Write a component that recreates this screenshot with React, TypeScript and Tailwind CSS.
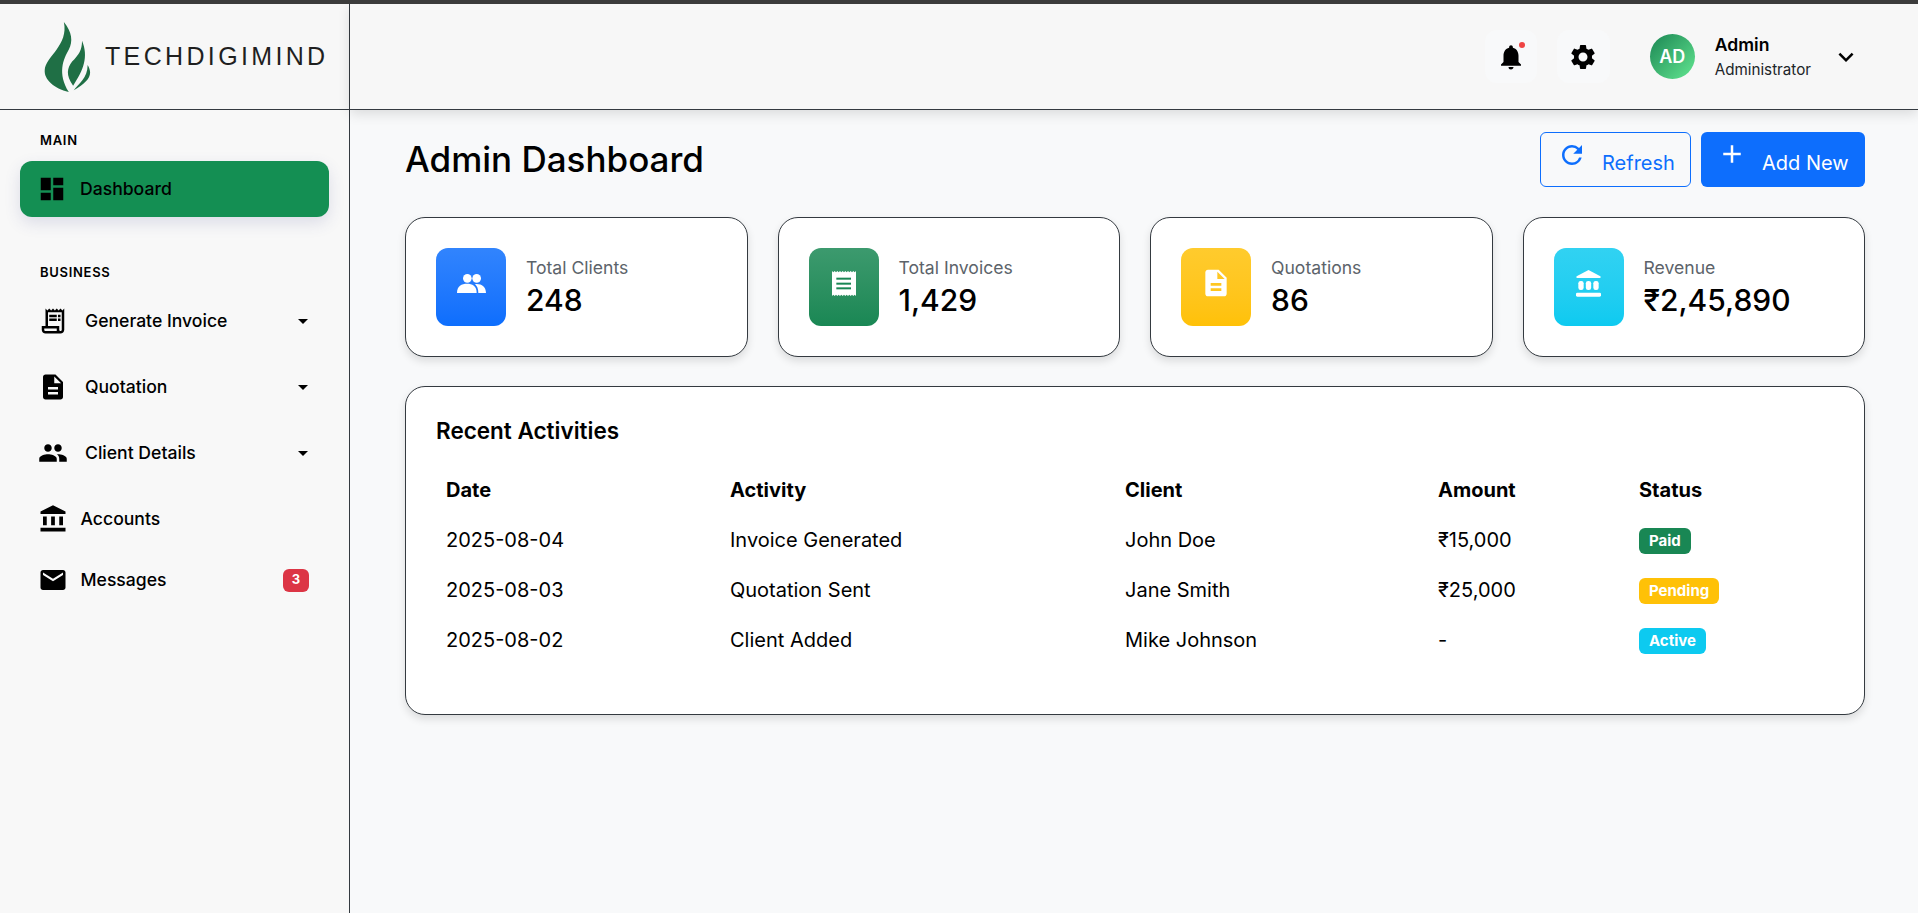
import React from 'react';
import {
  MdAccountBalance,
  MdAdd,
  MdArrowDropDown,
  MdDashboard,
  MdDescription,
  MdEmail,
  MdKeyboardArrowDown,
  MdNotifications,
  MdOutlineReceiptLong,
  MdPeople,
  MdRefresh,
  MdSettings,
} from 'react-icons/md';

// serrated top and bottom edge of the receipt in the stat card
const receiptPath = (() => {
  const teeth = 9;
  const step = 72 / teeth;
  let d = 'M0 0';
  for (let i = 0; i < teeth; i++) d += ` L${i * step + step / 2} 4 L${(i + 1) * step} 0`;
  d += ' L72 75';
  for (let i = teeth - 1; i >= 0; i--) d += ` L${i * step + step / 2} 71 L${i * step} 75`;
  return d + 'Z';
})();

const PeopleStat = () => (
  <svg width="29" height="19" viewBox="0 0 87 57" fill="#fff">
    <circle cx="31" cy="13" r="13" />
    <circle cx="59" cy="13" r="13" />
    <path d="M0 57 C0 35 14 29 30 29 C46 29 59 35 59 57Z" />
    <path d="M64 57 C64 44 60 36 54 30 C72 28 87 36 87 57Z" />
  </svg>
);

const ReceiptStat = () => (
  <svg width="24" height="25" viewBox="0 0 72 75">
    <path d={receiptPath} fill="#fff" />
    <rect x="13" y="20" width="44" height="6" fill="#198754" />
    <rect x="13" y="35" width="44" height="6" fill="#198754" />
    <rect x="13" y="49" width="44" height="6" fill="#198754" />
  </svg>
);

const DocStat = () => <MdDescription className="w-[32px] h-[32px] text-white" />;

const BankStat = () => (
  <svg width="25" height="27" viewBox="0 0 75 81" fill="#fff">
    <path d="M37.5 0 L73 19 Q76 24 71 24 H4 Q-1 24 2 19Z" />
    <rect x="7" y="33" width="16" height="27" rx="7" />
    <rect x="29.5" y="33" width="16" height="27" rx="7" />
    <rect x="52" y="33" width="16" height="27" rx="7" />
    <rect x="0" y="68" width="75" height="12" rx="4" />
  </svg>
);

const stats = [
  { label: 'Total Clients', value: '248', icon: PeopleStat, bg: 'from-[#3184fd] to-[#0d6efd]' },
  { label: 'Total Invoices', value: '1,429', icon: ReceiptStat, bg: 'from-[#3c9a6e] to-[#198754]' },
  { label: 'Quotations', value: '86', icon: DocStat, bg: 'from-[#ffcb2d] to-[#ffc107]' },
  { label: 'Revenue', value: '₹2,45,890', icon: BankStat, bg: 'from-[#31d2f2] to-[#0dcaf0]' },
];

const activities = [
  { date: '2025-08-04', activity: 'Invoice Generated', client: 'John Doe', amount: '₹15,000', status: 'Paid', badge: 'bg-[#198754]' },
  { date: '2025-08-03', activity: 'Quotation Sent', client: 'Jane Smith', amount: '₹25,000', status: 'Pending', badge: 'bg-[#ffc107]' },
  { date: '2025-08-02', activity: 'Client Added', client: 'Mike Johnson', amount: '-', status: 'Active', badge: 'bg-[#0dcaf0]' },
];

const Logo = () => (
  <div className="flex items-center pl-[44px]">
    <svg width="47" height="72" viewBox="130 62 142 218" className="shrink-0">
      <path d="M190 65 C215 95 218 125 205 148 C188 178 170 220 205 277 C160 265 130 240 132 210 C135 170 205 135 190 65Z" fill="#1f6f45" />
      <path d="M245 122 C265 170 250 210 218 258 C195 225 200 205 215 185 C235 165 245 150 245 122Z" fill="#1f6f45" />
      <path d="M262 195 C280 225 265 245 220 272 C235 250 262 235 262 195Z" fill="#1f6f45" />
    </svg>
    <span className="ml-[14px] text-[25px] leading-none tracking-[3.35px] text-[#1f1f1f] font-['Liberation_Sans',sans-serif]">
      TECHDIGIMIND
    </span>
  </div>
);

const NavItem = ({
  icon: Icon,
  label,
  caret,
  badge,
  rowClass,
}: {
  icon: React.ComponentType<{ className?: string }>;
  label: string;
  caret?: boolean;
  badge?: string;
  rowClass: string;
}) => (
  <div className={`flex items-center pl-[38px] ${badge ? 'pr-[40px]' : 'pr-[39px]'} ${rowClass}`}>
    <Icon className="w-[30px] h-[30px] shrink-0 text-black" />
    <span className={`text-[17.6px] font-medium text-black ${caret ? 'ml-[17px]' : 'ml-[12.5px]'}`}>{label}</span>
    {caret && <MdArrowDropDown className="ml-auto w-[24px] h-[24px] -mr-[5px] text-black" />}
    {badge && (
      <span className="ml-auto bg-[#dc3545] text-white text-[13px] font-bold rounded-[6px] w-[26px] h-[23px] flex items-center justify-center">
        {badge}
      </span>
    )}
  </div>
);

export default function App() {
  return (
    <div className="h-screen flex overflow-hidden border-t-4 border-[#3c3c3c] bg-[#f8f9fa] text-black font-['Inter',sans-serif]">
      <aside className="w-[350px] shrink-0 border-r border-[#343a40] bg-[#f8f8f8] flex flex-col">
        <div className="h-[106px] shrink-0 border-b border-[#343a40] bg-[#f7f7f7] flex items-center">
          <Logo />
        </div>
        <div className="text-[13px] font-semibold tracking-[0.7px] pl-[40px] pt-[21px] leading-[18px]">MAIN</div>
        <div className="mx-[20px] mt-[12px] h-[56px] rounded-[12px] bg-[#148f53] shadow-[0_6px_16px_rgba(60,70,140,0.15)] flex items-center pl-[17px]">
          <MdDashboard className="w-[30px] h-[30px] text-black" />
          <span className="ml-[13px] text-[17.6px] font-medium">Dashboard</span>
        </div>
        <div className="text-[13px] font-semibold tracking-[0.7px] pl-[40px] mt-[46px] leading-[18px]">BUSINESS</div>
        <div className="mt-[7px] flex flex-col">
          <NavItem icon={MdOutlineReceiptLong} label="Generate Invoice" caret rowClass="h-[66px]" />
          <NavItem icon={MdDescription} label="Quotation" caret rowClass="h-[66px]" />
          <NavItem icon={MdPeople} label="Client Details" caret rowClass="h-[66px]" />
          <NavItem icon={MdAccountBalance} label="Accounts" rowClass="h-[66px]" />
          <NavItem icon={MdEmail} label="Messages" badge="3" rowClass="h-[56px]" />
        </div>
      </aside>

      <div className="flex-1 min-w-0 flex flex-col">
        <header className="h-[106px] shrink-0 border-b border-[#343a40] bg-[#f7f7f7] shadow-[0_4px_12px_rgba(0,0,0,0.12)] flex items-center justify-end pr-[57px]">
          <button className="relative w-[52px] h-[53px] rounded-[12px] bg-[#f8f9fa] flex items-center justify-center">
            <MdNotifications className="w-[30px] h-[30px] text-black" />
            <span className="absolute top-[12px] right-[12px] w-[6px] h-[6px] rounded-full bg-[#ef4444]" />
          </button>
          <button className="ml-[20px] w-[53px] h-[53px] rounded-[12px] bg-[#f8f9fa] flex items-center justify-center">
            <MdSettings className="w-[30px] h-[30px] text-black" />
          </button>
          <div className="ml-[40px] w-[45px] h-[45px] rounded-full bg-gradient-to-br from-[#198754] to-[#62e791] flex items-center justify-center text-white text-[18px] font-semibold">
            AD
          </div>
          <div className="ml-[20px] mt-[2px] flex flex-col">
            <span className="text-[17.6px] font-semibold leading-[24px]">Admin</span>
            <span className="text-[15.2px] leading-[24px] mt-[1px] text-[#212529]">Administrator</span>
          </div>
          <MdKeyboardArrowDown className="ml-[20px] w-[30px] h-[30px] text-black" />
        </header>

        <main className="flex-1 pl-[55px] pr-[53px] pt-[22px]">
          <div className="flex items-center justify-between h-[55px]">
            <h1 className="text-[35px] font-medium leading-none">Admin Dashboard</h1>
            <div className="flex gap-[10px]">
              <button className="w-[151px] h-[55px] rounded-[6px] border border-[#0d6efd] text-[#0d6efd] flex items-start pl-[16px] pt-[7px]">
                <MdRefresh className="w-[30px] h-[30px]" />
                <span className="ml-[15px] mt-[8px] text-[20px] leading-[30px]">Refresh</span>
              </button>
              <button className="w-[164px] h-[55px] rounded-[6px] bg-[#0d6efd] text-white flex items-start pl-[16px] pt-[7px]">
                <MdAdd className="w-[30px] h-[30px]" />
                <span className="ml-[15px] mt-[9px] text-[20px] leading-[30px]">Add New</span>
              </button>
            </div>
          </div>

          <div className="grid grid-cols-4 gap-[30px] mt-[30px]">
            {stats.map((s) => (
              <div key={s.label} className="h-[140px] bg-white rounded-[20px] border border-[#343a40] shadow-[0_4px_8px_rgba(0,0,0,0.12)] flex items-center pl-[30px]">
                <div className={`w-[70px] h-[78px] rounded-[12px] bg-gradient-to-b ${s.bg} flex items-center justify-center pb-[8px]`}>
                  <s.icon />
                </div>
                <div className="ml-[20px]">
                  <div className="text-[17.6px] leading-[24px] text-[#5c636a]">{s.label}</div>
                  <div className="text-[30px] font-medium leading-[38px] mt-[1px]">{s.value}</div>
                </div>
              </div>
            ))}
          </div>

          <section className="mt-[29px] h-[329px] bg-white rounded-[20px] border border-[#343a40] shadow-[0_4px_8px_rgba(0,0,0,0.12)] px-[30px] pt-[28px]">
            <h2 className="text-[22.5px] font-semibold leading-[32px]">Recent Activities</h2>
            <table className="w-[1398px] table-fixed mt-[18px] text-[20px]">
              <thead>
                <tr className="h-[50px] text-left">
                  <th className="w-[284px] pl-[10px] font-bold">Date</th>
                  <th className="w-[395px] pl-[10px] font-bold">Activity</th>
                  <th className="w-[313px] pl-[10px] font-bold">Client</th>
                  <th className="w-[201px] pl-[10px] font-bold">Amount</th>
                  <th className="pl-[10px] font-bold">Status</th>
                </tr>
              </thead>
              <tbody>
                {activities.map((a) => (
                  <tr key={a.date} className="h-[50px]">
                    <td className="pl-[10px]">{a.date}</td>
                    <td className="pl-[10px]">{a.activity}</td>
                    <td className="pl-[10px]">{a.client}</td>
                    <td className="pl-[10px]">{a.amount}</td>
                    <td className="pl-[10px]">
                      <span className={`inline-block ${a.badge} text-white text-[15px] font-bold rounded-[6px] px-[10px] h-[26px] leading-[26px] align-middle -mt-[1px]`}>
                        {a.status}
                      </span>
                    </td>
                  </tr>
                ))}
              </tbody>
            </table>
          </section>
        </main>
      </div>
    </div>
  );
}
